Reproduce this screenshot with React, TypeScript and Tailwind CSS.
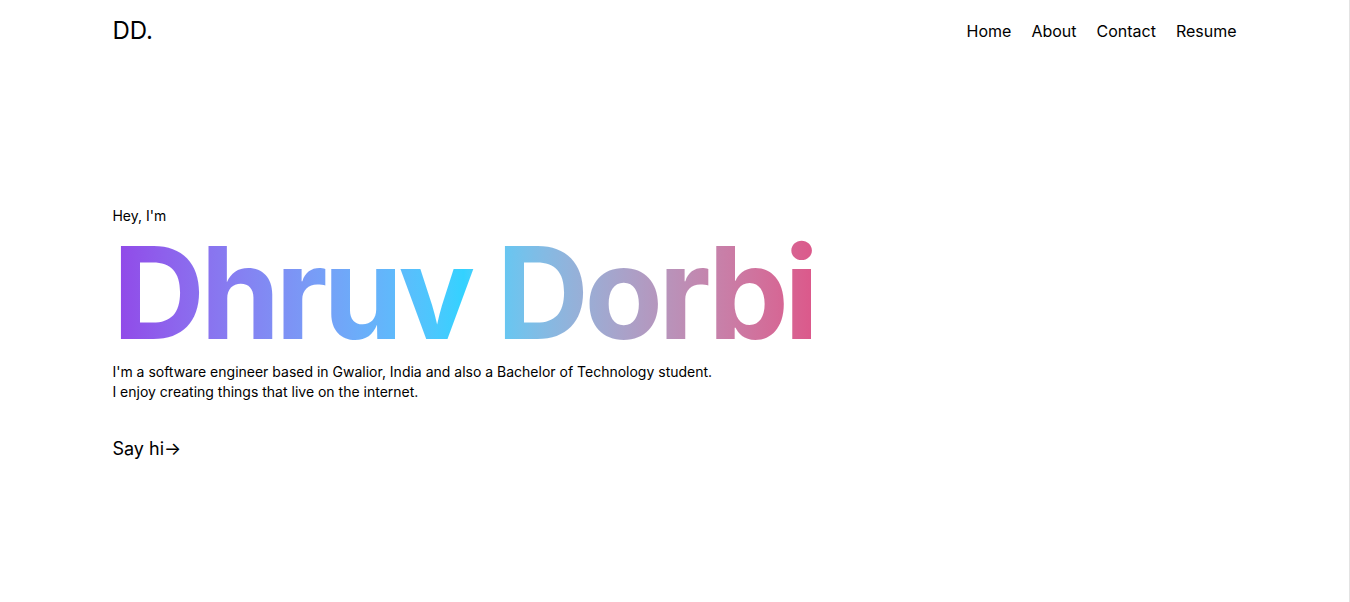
import React from "react";

const links = ["Home", "About", "Contact", "Resume"];

const App = () => {
  return (
    <div
      className="min-h-[602px] bg-white text-black border-r border-[#e3e3e3]"
      style={{ fontFamily: "Inter, 'Noto Sans', sans-serif" }}
    >
      <div className="w-10/12 mx-auto">
        {/* Header */}
        <header className="h-[62px] flex items-center justify-between">
          <span className="text-2xl">DD.</span>
          <nav className="flex items-center gap-5 text-base">
            {links.map((l) => (
              <a key={l} href="#" className="leading-6">
                {l}
              </a>
            ))}
          </nav>
        </header>

        {/* Hero */}
        <section className="pt-[144px]">
          <p className="text-sm leading-5">Hey, I'm</p>
          <h1 className="mt-[3px] text-9xl leading-none font-bold tracking-[-0.035em]">
            <span className="inline-block bg-linear-to-r from-[#9146e8] via-[#33d2ff] to-[#dc578a] bg-clip-text text-transparent">
              Dhruv Dorbi
            </span>
          </h1>
          <p className="mt-[5px] text-sm leading-5">
            I'm a software engineer based in Gwalior, India and also a Bachelor of Technology student.
            <br />
            I enjoy creating things that live on the internet.
          </p>
          <a href="#" className="inline-block mt-[33px] text-lg leading-7">
            Say hi→
          </a>
        </section>
      </div>
    </div>
  );
};

export default App;
